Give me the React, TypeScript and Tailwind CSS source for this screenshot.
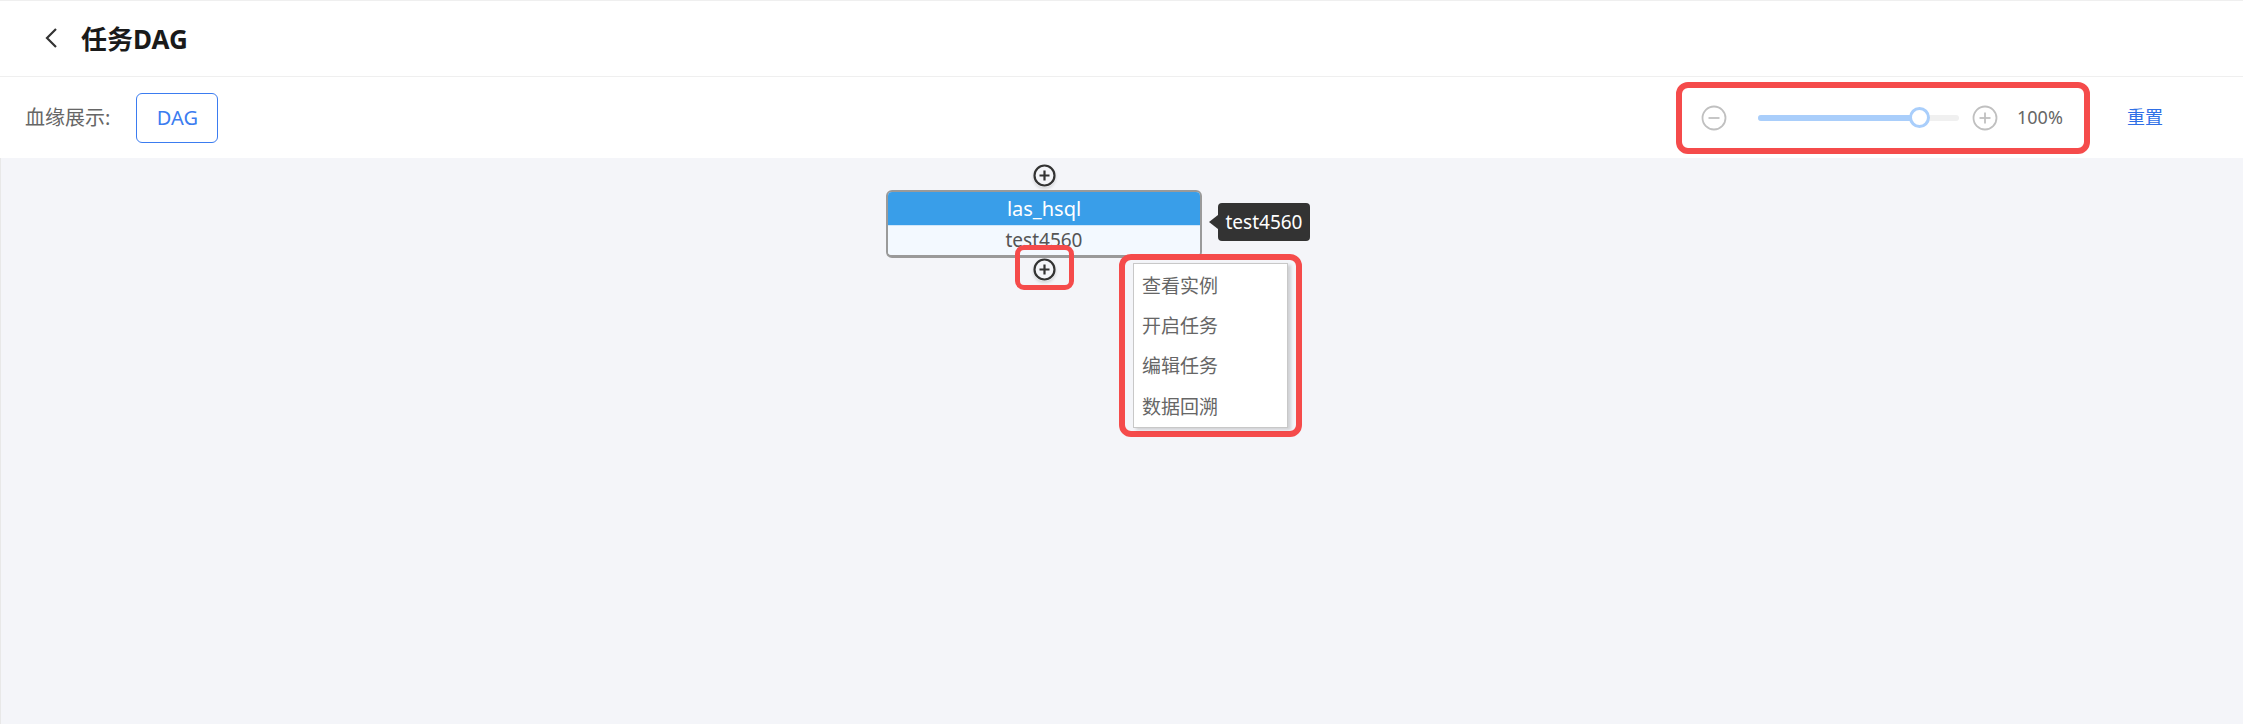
import React from 'react';

const FONT = '"Noto Sans", "Noto Sans CJK SC", sans-serif';

function PlusDot({ className = '' }: { className?: string }) {
  return (
    <div className={`absolute w-[23px] h-[23px] rounded-full bg-[#f4f5f9] shadow-[0_2px_3px_rgba(0,0,0,0.12)] ${className}`}>
      <svg viewBox="0 0 23 23" className="w-full h-full">
        <circle cx="11.5" cy="11.5" r="10" fill="none" stroke="#333" strokeWidth="2.2" />
        <path d="M11.5 6.5v10M6.5 11.5h10" stroke="#333" strokeWidth="2.2" />
      </svg>
    </div>
  );
}

function RoundIcon({ plus }: { plus?: boolean }) {
  return (
    <svg viewBox="0 0 26 26" className="w-[26px] h-[26px] shrink-0">
      <circle cx="13" cy="13" r="11.5" fill="none" stroke="#c0c0c0" strokeWidth="1.8" />
      <path d="M7.5 13h11" stroke="#c0c0c0" strokeWidth="1.8" />
      {plus && <path d="M13 7.5v11" stroke="#c0c0c0" strokeWidth="1.8" />}
    </svg>
  );
}

const menuItems = ['查看实例', '开启任务', '编辑任务', '数据回溯'];

export default function App() {
  return (
    <div className="w-[2243px] h-[724px] flex flex-col bg-white overflow-hidden" style={{ fontFamily: FONT }}>
      <header className="h-[77px] shrink-0 flex items-center border-t border-b border-[#efefef] pl-[44px]">
        <svg viewBox="0 0 14 22" className="w-[14px] h-[22px] mb-[2px]">
          <path d="M12 2 3 11l9 9" fill="none" stroke="#333" strokeWidth="2.2" />
        </svg>
        <h1 className="ml-[23px] text-[26px] font-bold text-[#1a1a1a] leading-none">任务DAG</h1>
      </header>

      <div className="h-[81px] shrink-0 flex items-center pl-[25px] pr-[80px]">
        <span className="text-[20px] text-[#666]">血缘展示:</span>
        <button className="ml-[26px] w-[82px] h-[50px] rounded-[6px] border border-[#3b7cf0] text-[20px] text-[#3b7cf0]">
          DAG
        </button>
        <div className="ml-auto w-[414px] h-[72px] flex items-center border-[6px] border-[#f54b4b] rounded-[12px] pl-[19px]">
          <RoundIcon />
          <div className="relative ml-[31px] w-[201px] h-[6px] rounded-full bg-[#f0f0f0]">
            <div className="absolute left-0 top-0 h-full w-[161px] rounded-full bg-[#a9cefb]" />
            <div className="absolute left-[151px] top-[-8px] w-[21px] h-[21px] rounded-full bg-white border-[3px] border-[#a9cefb]" />
          </div>
          <div className="ml-[13px]">
            <RoundIcon plus />
          </div>
          <span className="ml-[19px] text-[18px] text-[#666]">100%</span>
        </div>
        <a className="ml-[37px] text-[18px] text-[#2f6fe6] cursor-pointer">重置</a>
      </div>

      <div className="relative flex-1 bg-[#f4f5f9] border-l border-[#e8e8e8]">
        <PlusDot className="left-[1032px] top-[6px]" />

        <div className="absolute left-[885px] top-[32px] w-[316px] h-[68px] rounded-[6px] border-2 border-[#9a9a9a] border-b-[3px] overflow-hidden flex flex-col">
          <div className="h-[33px] bg-[#399ee9] text-white text-[20px] flex items-center justify-center">las_hsql</div>
          <div className="flex-1 bg-[#f3f9ff] text-[#555] text-[19px] flex items-center justify-center border-t border-[#cfe6f9]">
            test4560
          </div>
        </div>

        <PlusDot className="left-[1032px] top-[100px]" />
        <div className="absolute left-[1014px] top-[87px] w-[59px] h-[45px] rounded-[9px] border-[5px] border-[#f54b4b]" />

        <div className="absolute left-[1217px] top-[45px] h-[38px] w-[92px] rounded-[4px] bg-[#333] text-white text-[19px] flex items-center justify-center">
          <div className="absolute left-[-9px] top-[12px] w-0 h-0 border-y-[7px] border-y-transparent border-r-[9px] border-r-[#333]" />
          test4560
        </div>

        <div className="absolute left-[1118px] top-[96px] w-[183px] h-[183px] rounded-[12px] border-[6px] border-[#f54b4b] bg-[#f4f5f9]">
          <div className="ml-[8px] mt-[3px] w-[155px] h-[165px] bg-white border border-[#c8c8c8] shadow-[3px_2px_3px_rgba(0,0,0,0.15)] flex flex-col pt-[2px]">
            {menuItems.map((item) => (
              <div key={item} className="h-[41px] flex items-center pl-[8px] text-[19px] text-[#666]">
                {item}
              </div>
            ))}
          </div>
        </div>
      </div>
    </div>
  );
}
